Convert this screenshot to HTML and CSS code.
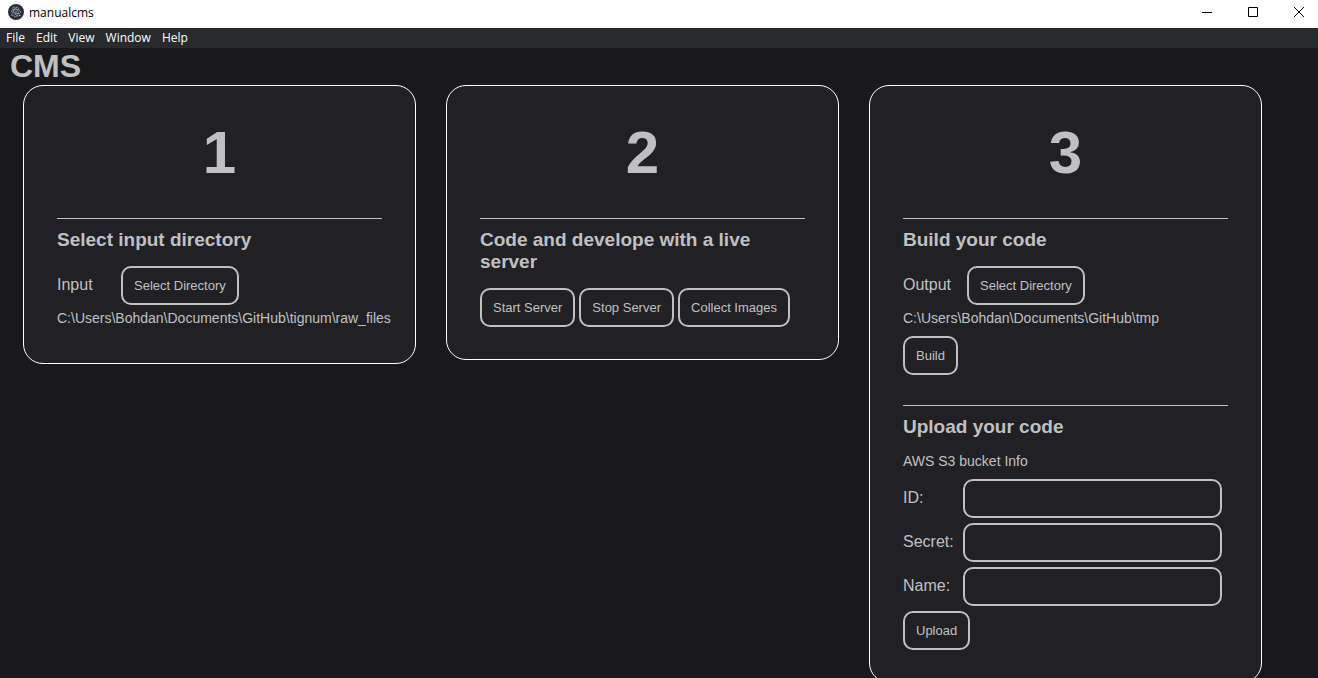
FILE: index.html
```
<!DOCTYPE html>
<html lang="en">
<head>
    <meta charset="UTF-8">
    <meta name="viewport" content="width=device-width, initial-scale=1.0">
    <title>manualcms</title>
    <link rel="stylesheet" href="styles.css">
</head>
<body>
    <header class="titlebar">
        <svg class="app-icon" width="16" height="16" viewBox="0 0 16 16">
            <circle cx="8" cy="8" r="8" fill="#2b2e3a"/>
            <g fill="none" stroke="#9fb8c8" stroke-width="0.7" stroke-linecap="round">
                <path d="M9.8 5.7C7 5.2 4 5.600 3.500 6.800C3.200 7.600 3.900 8.600 5.200 9.500"/>
                <path d="M11.300 6.200C12.500 6.900 13 7.700 12.700 8.400C12.300 9.500 9.800 10 7.300 9.600"/>
                <path d="M5.100 8C6.100 5.400 7.900 3 9.200 3.100C10.200 3.200 10.600 4.400 10.500 6"/>
                <path d="M10.400 8.500C9.800 11 8.500 12.900 7.400 12.900C6.700 12.900 6.100 12.300 5.800 11.300"/>
                <path d="M5 5C4.700 3.800 5 3 5.700 2.900C6.900 2.800 9 5 10.200 7.500"/>
                <path d="M5.300 6.600C5.800 8.900 7.700 11.500 9.800 12.200"/>
            </g>
            <g fill="#b5ccda">
                <circle cx="8" cy="8" r="0.7"/>
                <circle cx="3.900" cy="11" r="0.8"/>
                <circle cx="11.700" cy="11.500" r="0.8"/>
            </g>
        </svg>
        <span class="app-name">manualcms</span>
        <div class="window-buttons">
            <button type="button" aria-label="Minimize">
                <svg width="10" height="10" viewBox="0 0 10 10"><path d="M0 5.5H10"/></svg>
            </button>
            <button type="button" aria-label="Maximize">
                <svg width="10" height="10" viewBox="0 0 10 10"><path d="M.5 .5H9.5V9.5H.5Z"/></svg>
            </button>
            <button type="button" aria-label="Close">
                <svg width="10" height="10" viewBox="0 0 10 10"><path d="M0 0L10 10M10 0L0 10"/></svg>
            </button>
        </div>
    </header>

    <nav class="menubar">
        <button type="button">File</button>
        <button type="button">Edit</button>
        <button type="button">View</button>
        <button type="button">Window</button>
        <button type="button">Help</button>
    </nav>

    <main>
        <h1>CMS</h1>

        <div class="container">
            <div class="card">
                <div class="number">1</div>
                <section>
                    <h3>Select input directory</h3>
                    <div class="row">
                        <label for="input-dir">Input</label>
                        <button type="button" class="btn" id="input-dir">Select Directory</button>
                    </div>
                    <p class="path">C:\Users\Bohdan\Documents\GitHub\tignum\raw_files</p>
                </section>
            </div>

            <div class="card">
                <div class="number">2</div>
                <section>
                    <h3>Code and develope with a live server</h3>
                    <div class="row">
                        <button type="button" class="btn">Start Server</button>
                        <button type="button" class="btn">Stop Server</button>
                        <button type="button" class="btn">Collect Images</button>
                    </div>
                </section>
            </div>

            <div class="card">
                <div class="number">3</div>
                <section>
                    <h3>Build your code</h3>
                    <div class="row">
                        <label for="output-dir">Output</label>
                        <button type="button" class="btn" id="output-dir">Select Directory</button>
                    </div>
                    <p class="path">C:\Users\Bohdan\Documents\GitHub\tmp</p>
                    <div class="row">
                        <button type="button" class="btn">Build</button>
                    </div>
                </section>
                <section>
                    <h3>Upload your code</h3>
                    <p class="info">AWS S3 bucket Info</p>
                    <form class="bucket">
                        <div class="field">
                            <label for="bucket-id">ID:</label>
                            <input type="text" id="bucket-id">
                        </div>
                        <div class="field">
                            <label for="bucket-secret">Secret:</label>
                            <input type="text" id="bucket-secret">
                        </div>
                        <div class="field">
                            <label for="bucket-name">Name:</label>
                            <input type="text" id="bucket-name">
                        </div>
                        <button type="button" class="btn">Upload</button>
                    </form>
                </section>
            </div>
        </div>
    </main>
</body>
</html>
```
FILE: styles.css
```
* {
    box-sizing: border-box;
}

html {
    scrollbar-width: none;
}

body {
    margin: 0;
    background-color: #19191b;
    color: #c0c0c3;
    font-family: Arial, "Liberation Sans", sans-serif;
}

/* window frame */
.titlebar {
    display: flex;
    align-items: center;
    height: 28px;
    padding-left: 8px;
    background: white;
    color: black;
    font: 12px "Segoe UI", "Open Sans", sans-serif;
}

.app-icon {
    margin-right: 5px;
    margin-bottom: 4px;
}

.app-name {
    margin-bottom: 4px;
}

.window-buttons {
    display: flex;
    height: 100%;
    margin-left: auto;
    margin-right: -4px;
}

.window-buttons button {
    width: 46px;
    padding: 0 0 4px;
    border: none;
    background: none;
}

.window-buttons svg {
    display: block;
    margin: 0 auto;
    fill: none;
    stroke: black;
}

.menubar {
    display: flex;
    gap: 11px;
    height: 20px;
    padding: 0 6px;
    background-color: #292a2d;
}

.menubar button {
    padding: 0 0 2px;
    border: none;
    background: none;
    color: white;
    font: 12px "Segoe UI", "Open Sans", sans-serif;
}

/* page */
h1 {
    margin: 0;
    padding-left: 10px;
    font-size: 32px;
    line-height: 37px;
}

.container {
    display: grid;
    grid-template-columns: repeat(3, minmax(0, 1fr));
    align-items: start;
    gap: 30px;
    padding: 0 56px 0 23px;
}

.card {
    padding: 32px 33px;
    border: 1px solid white;
    border-radius: 20px;
    background-color: #212125;
}

.number {
    font-size: 60px;
    font-weight: bold;
    line-height: 70px;
    text-align: center;
}

section {
    margin-top: 30px;
    padding-top: 10px;
    border-top: 1px solid #c0c0c3;
}

h3 {
    margin: 0 0 15px;
    font-size: 19px;
    line-height: 22px;
}

.row {
    display: flex;
    align-items: center;
    gap: 4px;
}

label {
    flex: none;
    width: 60px;
    padding-bottom: 2px;
    font-size: 16px;
}

.btn,
input {
    height: 39px;
    padding: 0 11px;
    border: 2px solid #c0c0c3;
    border-radius: 10px;
    background: transparent;
    color: #c0c0c3;
    font: 500 13px Arial, "Liberation Sans", sans-serif;
}

.path {
    margin: 5px 0;
    font-size: 14px;
    line-height: 16px;
}

.path + .row {
    margin-top: 10px;
}

.info {
    margin: 0 0 10px;
    font-size: 14px;
    line-height: 16px;
}

.bucket {
    display: flex;
    flex-direction: column;
    align-items: flex-start;
    gap: 5px;
}

.field {
    display: flex;
    align-items: center;
    width: 100%;
    padding-right: 6px;
}

.field input {
    flex: 1;
    min-width: 0;
}
```
